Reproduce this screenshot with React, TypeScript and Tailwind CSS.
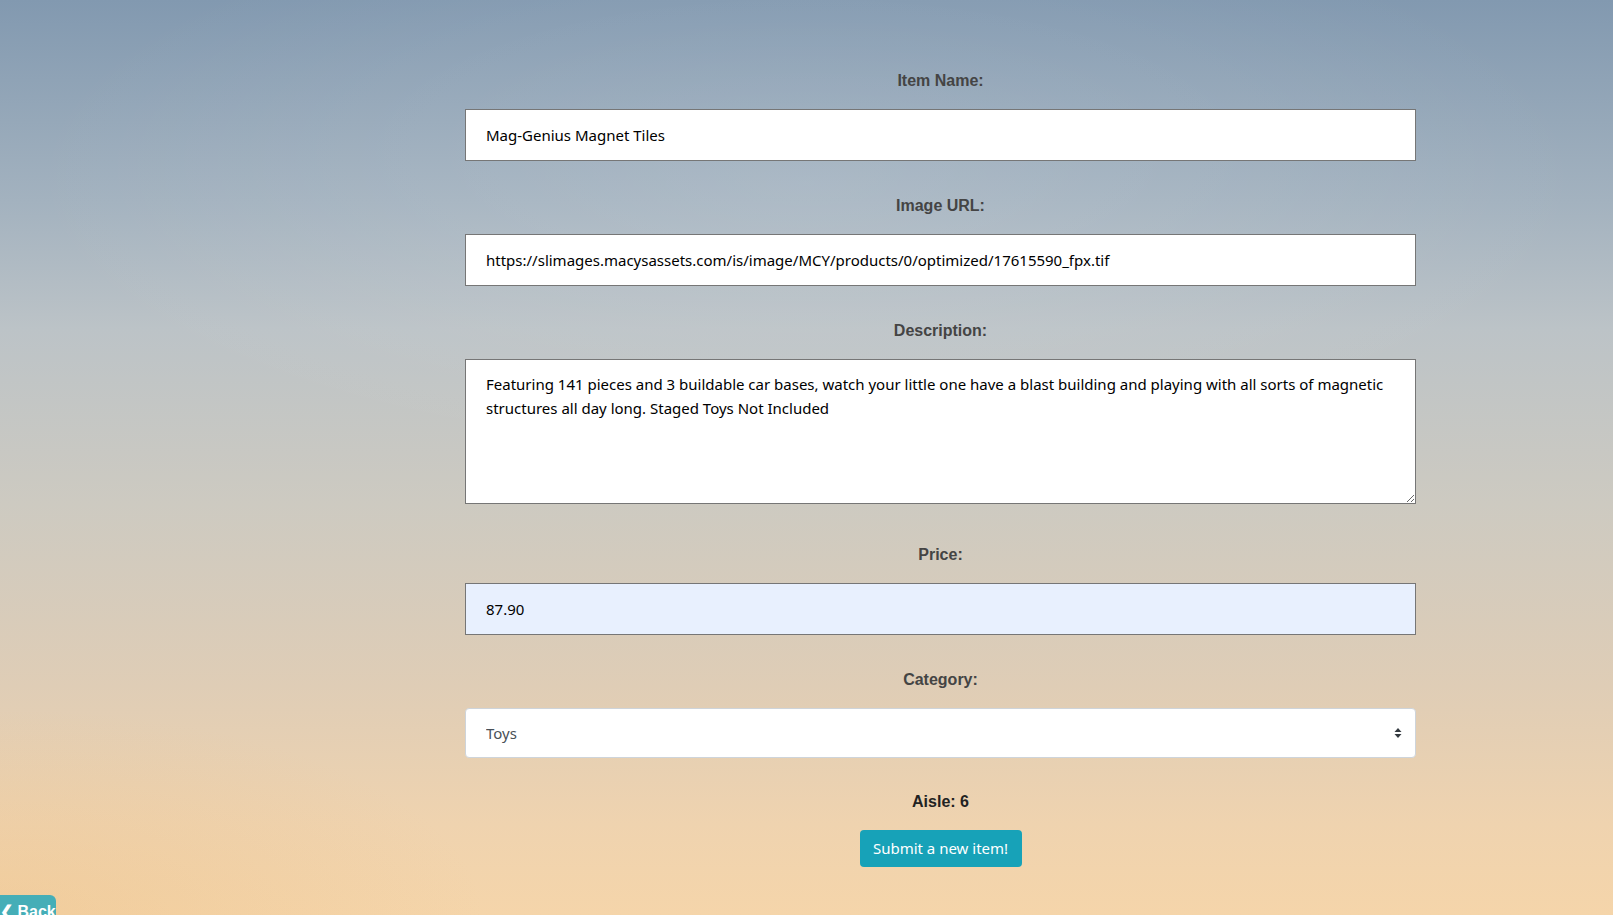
import React, { useState } from "react";

const labelCls =
  "block pt-[2px] text-center text-[16px] leading-6 font-bold text-[#444] font-['Liberation_Sans',Arial,sans-serif]";
const inputCls =
  "block w-full h-[52px] px-5 border border-[#767676] text-[15px] text-black outline-none font-['Noto_Sans',sans-serif]";

export default function App() {
  const [name, setName] = useState("Mag-Genius Magnet Tiles");
  const [url, setUrl] = useState(
    "https://slimages.macysassets.com/is/image/MCY/products/0/optimized/17615590_fpx.tif"
  );
  const [desc, setDesc] = useState(
    "Featuring 141 pieces and 3 buildable car bases, watch your little one have a blast building and playing with all sorts of magnetic structures all day long. Staged Toys Not Included"
  );
  const [price, setPrice] = useState("87.90");
  const [category, setCategory] = useState("Toys");

  return (
    <div className="relative min-h-[915px] overflow-hidden bg-[linear-gradient(180deg,#8299b0_0%,#a3b2bf_22%,#bcc3c7_36%,#cdcac1_55%,#dfcdb6_75%,#efd3af_90%,#f5d5aa_100%)]">
      {/* lighter haze in the middle of the sky, warmer glow low on the left */}
      <div className="pointer-events-none absolute inset-0 bg-[radial-gradient(ellipse_70%_45%_at_50%_20%,rgba(255,255,255,0.12),transparent_70%)]" />
      <div className="pointer-events-none absolute inset-0 bg-[radial-gradient(ellipse_40%_30%_at_0%_100%,rgba(235,190,130,0.35),transparent_75%)]" />

      <form
        className="relative ml-[465px] w-[951px] pt-[67px] pb-[48px]"
        onSubmit={e => e.preventDefault()}
      >
        <label className={labelCls}>Item Name:</label>
        <input
          className={`${inputCls} mt-[16px] bg-white`}
          value={name}
          onChange={e => setName(e.target.value)}
        />

        <label className={`${labelCls} mt-[31px]`}>Image URL:</label>
        <input
          className={`${inputCls} mt-[16px] bg-white`}
          value={url}
          onChange={e => setUrl(e.target.value)}
        />

        <label className={`${labelCls} mt-[31px]`}>Description:</label>
        <textarea
          className="block mt-[16px] w-full h-[145px] px-5 py-3 border border-[#767676] bg-white text-[15px] leading-6 text-black outline-none font-['Noto_Sans',sans-serif]"
          value={desc}
          onChange={e => setDesc(e.target.value)}
        />

        <label className={`${labelCls} mt-[37px]`}>Price:</label>
        <input
          className={`${inputCls} mt-[16px] bg-[#e8f0fe]`}
          value={price}
          onChange={e => setPrice(e.target.value)}
        />

        <label className={`${labelCls} mt-[31px]`}>Category:</label>
        <div className="relative mt-[16px]">
          <select
            className="block w-full h-[50px] appearance-none rounded bg-white border border-[#ced4da] pl-5 pr-10 text-[15px] text-[#495057] outline-none font-['Noto_Sans',sans-serif]"
            value={category}
            onChange={e => setCategory(e.target.value)}
          >
            <option>Toys</option>
            <option>Electronics</option>
            <option>Clothing</option>
            <option>Home</option>
          </select>
          <svg
            className="pointer-events-none absolute right-[14px] top-1/2 -translate-y-1/2"
            width="8"
            height="12"
            viewBox="0 0 8 12"
          >
            <path d="M4 1 L7.5 5 H0.5 Z M4 11 L0.5 7 H7.5 Z" fill="#343a40" />
          </svg>
        </div>

        <p className="mt-[32px] text-center text-[16px] leading-6 font-bold text-[#222] font-['Liberation_Sans',Arial,sans-serif]">
          Aisle: {category === "Toys" ? 6 : 3}
        </p>

        <div className="mt-[16px] flex justify-center">
          <button
            type="submit"
            className="h-[37px] w-[162px] rounded bg-[#17a2b8] text-white text-[15px] font-['Noto_Sans',sans-serif]"
          >
            Submit a new item!
          </button>
        </div>
      </form>

      {/* back button peeking from the bottom-left corner */}
      <button className="absolute left-[-8px] top-[895px] h-[34px] w-[64px] rounded-md bg-[#45aeb7] pl-2 text-left text-[16px] leading-[28px] font-bold text-white font-['Liberation_Sans',Arial,sans-serif]">
        ❮ Back
      </button>
    </div>
  );
}
